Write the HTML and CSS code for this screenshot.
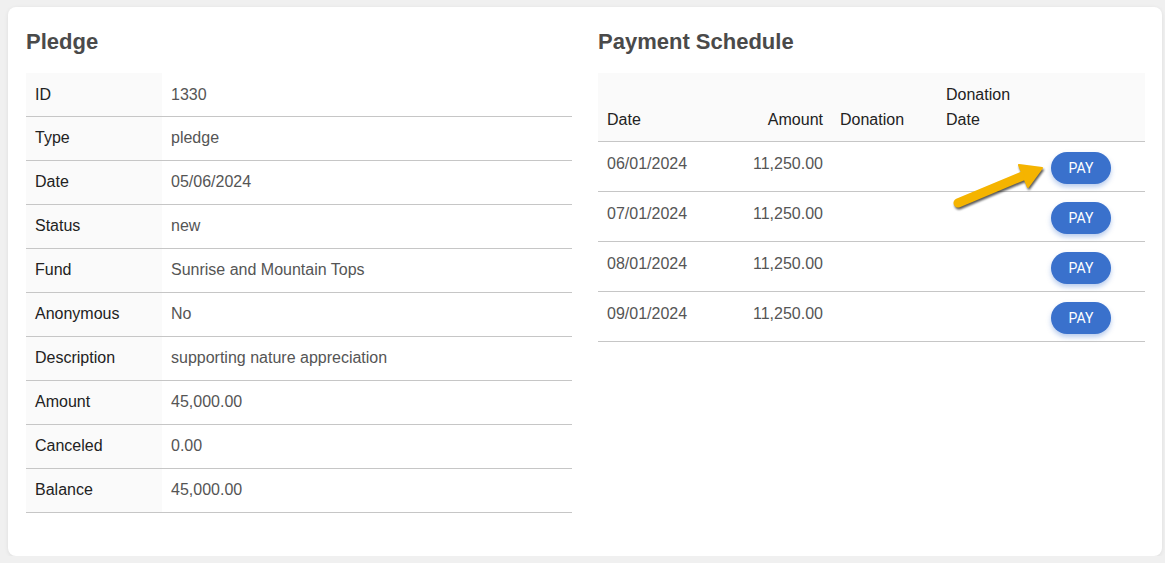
FILE: index.html
```
<!DOCTYPE html>
<html lang="en">
<head>
    <meta charset="UTF-8">
    <title>Pledge 1330</title>
<link rel="stylesheet" href="styles.css">
</head>
<body>
    <div class="card">
        <div class="section">
            <h2>Pledge</h2>
            <table class="details">
                <tr><th>ID</th><td>1330</td></tr>
                <tr><th>Type</th><td>pledge</td></tr>
                <tr><th>Date</th><td>05/06/2024</td></tr>
                <tr><th>Status</th><td>new</td></tr>
                <tr><th>Fund</th><td>Sunrise and Mountain Tops</td></tr>
                <tr><th>Anonymous</th><td>No</td></tr>
                <tr><th>Description</th><td>supporting nature appreciation</td></tr>
                <tr><th>Amount</th><td>45,000.00</td></tr>
                <tr><th>Canceled</th><td>0.00</td></tr>
                <tr><th>Balance</th><td>45,000.00</td></tr>
            </table>
        </div>

        <div class="section">
            <h2>Payment Schedule</h2>
            <table class="schedule">
                <thead>
                    <tr>
                        <th class="col-date">Date</th>
                        <th class="col-amount num">Amount</th>
                        <th class="col-donation">Donation</th>
                        <th class="col-donation-date">Donation Date</th>
                        <th class="col-action"></th>
                    </tr>
                </thead>
                <tbody>
                    <tr>
                        <td>06/01/2024</td>
                        <td class="num">11,250.00</td>
                        <td></td>
                        <td></td>
                        <td><button class="pay">PAY</button></td>
                    </tr>
                    <tr>
                        <td>07/01/2024</td>
                        <td class="num">11,250.00</td>
                        <td></td>
                        <td></td>
                        <td><button class="pay">PAY</button></td>
                    </tr>
                    <tr>
                        <td>08/01/2024</td>
                        <td class="num">11,250.00</td>
                        <td></td>
                        <td></td>
                        <td><button class="pay">PAY</button></td>
                    </tr>
                    <tr>
                        <td>09/01/2024</td>
                        <td class="num">11,250.00</td>
                        <td></td>
                        <td></td>
                        <td><button class="pay">PAY</button></td>
                    </tr>
                </tbody>
            </table>
        </div>

        <svg class="pointer" width="105" height="60" viewBox="0 0 105 60">
            <line x1="13" y1="48" x2="80" y2="20" stroke="#f5b400" stroke-width="9" stroke-linecap="round"/>
            <polygon points="97,13 83,32 74,10" fill="#f5b400" stroke="#f5b400" stroke-width="2" stroke-linejoin="round"/>
        </svg>
    </div>
</body>
</html>
```

FILE: styles.css
```
* {
    box-sizing: border-box;
}

body {
    margin: 0;
    background-color: #f0f0f0;
    font-family: "Liberation Sans", Arial, sans-serif;
    font-size: 16px;
    line-height: 24px;
    color: #222;
}

.card {
    position: relative;
    display: grid;
    grid-template-columns: 546px 547px;
    column-gap: 26px;
    margin: 7px 3px 0 8px;
    padding: 20px 17px 44px 18px;
    height: 549px;
    background-color: #fff;
    border-radius: 8px;
    box-shadow: 0 1px 4px rgba(0, 0, 0, 0.08);
}

h2 {
    margin: 0 0 16px;
    font-size: 22px;
    line-height: 30px;
    font-weight: bold;
    color: #4a4a4a;
}

table {
    width: 100%;
    border-collapse: collapse;
}

.details th,
.details td {
    padding: 9px 9px 10px;
    text-align: left;
    font-weight: normal;
    border-bottom: 1px solid #c6c6c6;
}

.details tr:first-child th,
.details tr:first-child td {
    padding-top: 10px;
    padding-bottom: 9px;
}

.details th {
    width: 136px;
    background-color: #fafafa;
    color: #222;
}

.details td {
    color: #555;
}

.schedule {
    table-layout: fixed;
}

.schedule thead tr {
    background-color: #fafafa;
}

.schedule th {
    height: 68px;
    padding: 9px 9px 9px;
    line-height: 25px;
    text-align: left;
    vertical-align: bottom;
    font-weight: normal;
    color: #222;
    border-bottom: 1px solid #c6c6c6;
}

.schedule td {
    padding: 10px 9px 7px;
    vertical-align: top;
    color: #555;
    border-bottom: 1px solid #c6c6c6;
}

.schedule .num {
    text-align: right;
}

.col-date { width: 122px; }
.col-amount { width: 112px; }
.col-donation { width: 106px; }
.col-donation-date { width: 105px; }
.col-action { width: 102px; }

.schedule th.col-donation,
.schedule th.col-donation-date {
    padding-left: 8px;
}

.pay {
    display: block;
    width: 60px;
    height: 32px;
    margin: 0 0 0 -1px;
    border: none;
    border-radius: 16px;
    background-color: #3a71cc;
    color: #fff;
    font-family: Roboto, "Liberation Sans", sans-serif;
    font-size: 14px;
    cursor: pointer;
    box-shadow: 0 3px 5px rgba(58, 113, 204, 0.35);
}

.pointer {
    position: absolute;
    left: 937px;
    top: 148px;
    filter: drop-shadow(1px 2px 1px rgba(0, 0, 0, 0.65));
}
```
